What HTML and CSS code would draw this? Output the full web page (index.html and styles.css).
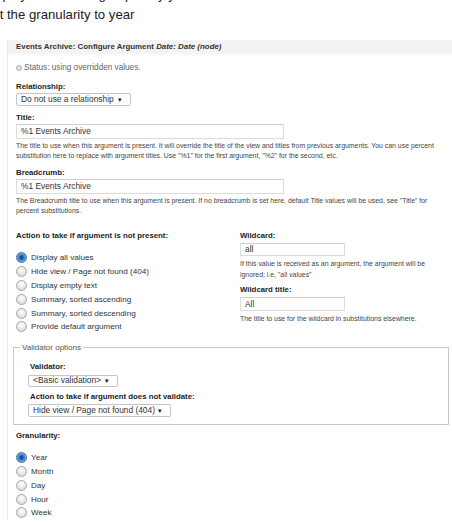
FILE: index.html
```html
<!DOCTYPE html>
<html lang="en">
<head>
    <meta charset="UTF-8">
    <title>Events Archive</title>
    <link rel="stylesheet" href="styles.css">
</head>
<body>
    <div class="intro">
        <p>Display the archive grouped by year</p>
        <p>Set the granularity to year</p>
    </div>
    <div class="panel">
        <div class="panel-head">Events Archive: Configure Argument <em>Date: Date (node)</em></div>
        <div class="panel-body">
            <p class="status"><span class="status-icon"></span>Status: using overridden values.</p>

            <label class="lbl first">Relationship:</label>
            <div class="select sel-rel">Do not use a relationship <span class="arrow">&#9662;</span></div>

            <label class="lbl field">Title:</label>
            <div class="input wide">%1 Events Archive</div>
            <p class="desc">The title to use when this argument is present. It will override the title of the view and titles from previous arguments. You can use percent substitution here to replace with argument titles. Use "%1" for the first argument, "%2" for the second, etc.</p>

            <label class="lbl field">Breadcrumb:</label>
            <div class="input wide">%1 Events Archive</div>
            <p class="desc">The Breadcrumb title to use when this argument is present. If no breadcrumb is set here, default Title values will be used, see "Title" for percent substitutions.</p>

            <div class="cols">
                <div class="col-left">
                    <label class="lbl">Action to take if argument is not present:</label>
                    <ul class="radios">
                        <li><span class="radio checked"></span>Display all values</li>
                        <li><span class="radio"></span>Hide view / Page not found (404)</li>
                        <li><span class="radio"></span>Display empty text</li>
                        <li><span class="radio"></span>Summary, sorted ascending</li>
                        <li><span class="radio"></span>Summary, sorted descending</li>
                        <li><span class="radio"></span>Provide default argument</li>
                    </ul>
                </div>
                <div class="col-right">
                    <label class="lbl">Wildcard:</label>
                    <div class="input small">all</div>
                    <p class="desc">If this value is received as an argument, the argument will be ignored; i.e, "all values"</p>
                    <label class="lbl wild-title">Wildcard title:</label>
                    <div class="input small tall">All</div>
                    <p class="desc">The title to use for the wildcard in substitutions elsewhere.</p>
                </div>
            </div>

            <fieldset class="validator">
                <legend>Validator options</legend>
                <label class="lbl val-first">Validator:</label>
                <div class="select sel-val">&lt;Basic validation&gt; <span class="arrow">&#9662;</span></div>
                <label class="lbl val-second">Action to take if argument does not validate:</label>
                <div class="select sel-act">Hide view / Page not found (404) <span class="arrow">&#9662;</span></div>
            </fieldset>

            <label class="lbl gran">Granularity:</label>
            <ul class="radios gran-list">
                <li><span class="radio checked"></span>Year</li>
                <li><span class="radio"></span>Month</li>
                <li><span class="radio"></span>Day</li>
                <li><span class="radio"></span>Hour</li>
                <li><span class="radio"></span>Week</li>
            </ul>
        </div>
    </div>
</body>
</html>
```
FILE: styles.css
```css
*{
    margin: 0;
    padding: 0;
    box-sizing: border-box;
}
body{
    background: #fff;
    color: #333;
    font-family: "Liberation Sans", Arial, sans-serif;
    overflow: hidden;
}
.intro{
    margin: -15.5px 0 0 -16.5px;
    font-size: 13.2px;
    line-height: 20px;
    color: #222;
    white-space: nowrap;
}
.panel{
    margin: 15.5px 0 0 7px;
    border-left: 1px solid #ebebeb;
}
.panel-head{
    height: 13px;
    padding-left: 8px;
    background: #f3f3f3;
    box-shadow: 0 2px 3px rgba(0,0,0,.04);
    font-weight: bold;
    font-size: 7.9px;
    line-height: 13px;
    color: #333;
    white-space: nowrap;
}
.panel-body{
    padding: 0 3px 0 8px;
}
.status{
    display: flex;
    align-items: center;
    gap: 2px;
    margin-top: 10px;
    height: 10px;
    font-size: 8.2px;
    line-height: 10px;
    color: #666;
}
.status-icon{
    width: 6px;
    height: 6px;
    border-radius: 50%;
    border: 1px solid #aaa;
    background: #e4e4e4;
}
.lbl{
    display: block;
    margin-top: 6px;
    height: 10px;
    font-size: 7.8px;
    line-height: 10px;
    font-weight: bold;
    color: #222;
    white-space: nowrap;
}
.lbl.first{
    margin-top: 9px;
}
.lbl.field{
    margin-top: 7px;
}
.select{
    display: flex;
    align-items: center;
    justify-content: space-between;
    margin-top: 1px;
    height: 13px;
    padding: 0 8px 0 4px;
    border: 1px solid #c4c4c4;
    border-radius: 2px;
    background: #fff;
    font-size: 8.4px;
    line-height: 11px;
    color: #333;
    white-space: nowrap;
}
.arrow{
    font-size: 7px;
    color: #111;
}
.sel-rel{
    width: 115px;
}
.input{
    margin-top: 1px;
    height: 15px;
    padding-left: 4px;
    border: 1px solid #dcdcdc;
    border-top-color: #cfcfcf;
    background: #fff;
    font-size: 8.4px;
    line-height: 13px;
    color: #333;
}
.wide{
    width: 268px;
}
.small{
    width: 105px;
    margin-top: 2px;
    height: 13px;
    line-height: 11px;
}
.small.tall{
    height: 14px;
    line-height: 12px;
}
.desc{
    margin-top: 2px;
    font-size: 6.9px;
    line-height: 10px;
    color: #444;
}
.cols{
    display: grid;
    grid-template-columns: 224px 1fr;
    margin-top: 9px;
}
.col-right .desc{
    line-height: 11px;
}
.lbl.wild-title{
    margin-top: 5px;
}
.radios{
    list-style: none;
    margin-top: 10px;
}
.radios li{
    display: flex;
    align-items: center;
    gap: 4px;
    height: 13.8px;
    font-size: 8.1px;
    color: #333;
    white-space: nowrap;
}
.radio{
    width: 11px;
    height: 11px;
    border-radius: 50%;
    border: 1px solid #a8a8a8;
    background: radial-gradient(circle at 50% 35%, #fff 0, #f0f0f0 35%, #cfcfcf 100%);
}
.radio.checked{
    border-color: #4b6f96;
    background: radial-gradient(circle at 50% 50%, #0d3f7a 0, #1d5fa8 25%, #5aa0e0 60%, #a9d0f2 100%);
}
.validator{
    margin: 9px 0 0 -3px;
    padding: 0 6px 7px 14px;
    border: 1px solid #c8c8c8;
}
.validator legend{
    margin-left: -8px;
    padding: 0 2px;
    height: 10px;
    font-size: 8px;
    line-height: 10px;
    color: #555;
}
.validator .lbl{
    padding-left: 2px;
}
.lbl.val-first{
    margin-top: 9px;
}
.lbl.val-second{
    margin-top: 5px;
}
.sel-val{
    width: 90px;
    margin-top: 3px;
    height: 12px;
}
.sel-act{
    width: 143px;
    margin-top: 2px;
}
.lbl.gran{
    margin-top: 6px;
}
.radios.gran-list{
    margin-top: 10px;
}
```
